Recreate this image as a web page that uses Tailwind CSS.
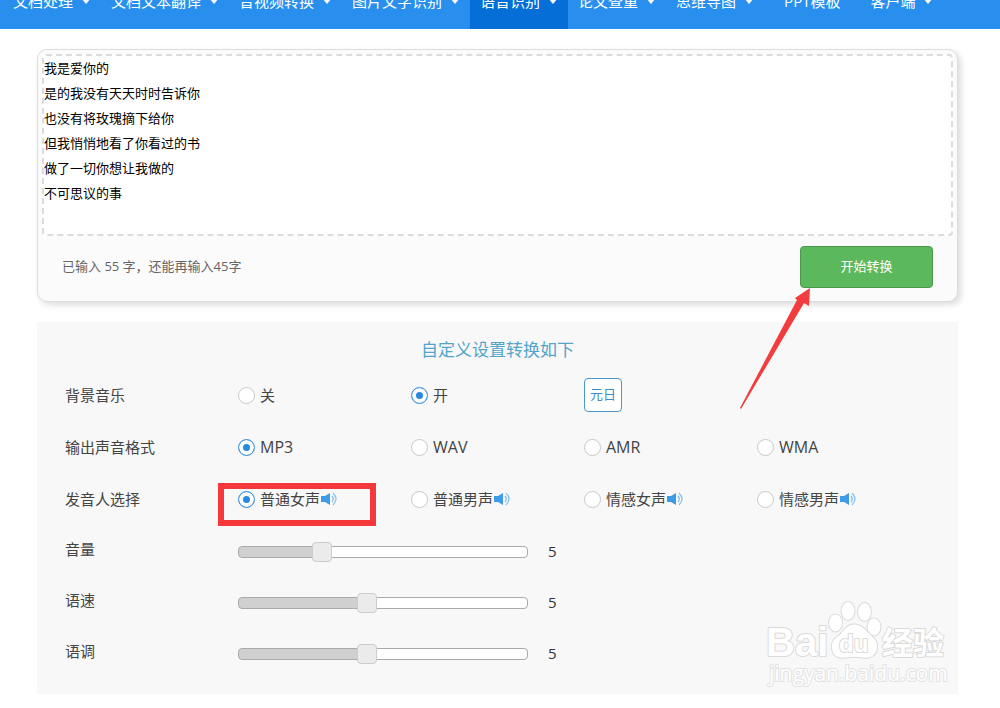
<!DOCTYPE html>
<html lang="zh-CN">
  <head>
    <meta charset="UTF-8" />
    <meta name="viewport" content="width=device-width, initial-scale=1.0" />
    <title>语音识别</title>
    <script src="https://cdn.jsdelivr.net/npm/@tailwindcss/browser@4"></script>
  </head>

  <body class="bg-white text-[#444] text-[15px] font-['Open_Sans','Noto_Sans_CJK_SC',sans-serif]">
    <svg class="hidden">
      <symbol id="caret" viewBox="0 0 10 6">
        <path d="M0 0h10L5 6z" fill="currentColor" />
      </symbol>
      <symbol id="speaker" viewBox="0 0 17 14">
        <path d="M0 4h4L9 1v12L4 10H0z" fill="#3f9be6" />
        <path d="M11 4q2.500 3 0 6" fill="none" stroke="#7dbdf0" stroke-width="1.300" />
        <path d="M12 1q6 6 0 12" fill="none" stroke="#8cc4f0" stroke-width="1.300" />
      </symbol>
    </svg>

    <header class="h-[29px] overflow-hidden bg-[#288fef]">
      <nav class="-mt-[27px] h-14 pl-[3px] flex text-white whitespace-nowrap">
        <a href="#" class="flex items-center gap-2 px-2.5">文档处理<svg class="w-2.5 h-1.5"><use href="#caret" /></svg></a>
        <a href="#" class="flex items-center gap-2 px-2.5">文档文本翻译<svg class="w-2.5 h-1.5"><use href="#caret" /></svg></a>
        <a href="#" class="flex items-center gap-2 px-2.5">音视频转换<svg class="w-2.5 h-1.5"><use href="#caret" /></svg></a>
        <a href="#" class="flex items-center gap-2 px-2.5">图片文字识别<svg class="w-2.5 h-1.5"><use href="#caret" /></svg></a>
        <a href="#" class="flex items-center gap-2 px-2.5 bg-[#056fd7]">语音识别<svg class="w-2.5 h-1.5"><use href="#caret" /></svg></a>
        <a href="#" class="flex items-center gap-2 px-2.5">论文查重<svg class="w-2.5 h-1.5"><use href="#caret" /></svg></a>
        <a href="#" class="flex items-center gap-2 px-2.5">思维导图<svg class="w-2.5 h-1.5"><use href="#caret" /></svg></a>
        <a href="#" class="flex items-center px-5">PPT模板</a>
        <a href="#" class="flex items-center gap-2 px-2.5">客户端<svg class="w-2.5 h-1.5"><use href="#caret" /></svg></a>
      </nav>
    </header>

    <main class="pt-5 pl-[37px] pr-[42px] pb-3">
      <!-- Texto de entrada -->
      <section class="p-1 border border-[#ddd] rounded-[10px] bg-[#fbfbfb] shadow-[3px_3px_6px_#ddd]">
        <textarea
          aria-label="输入文字"
          class="block w-full h-[182px] resize-none overflow-hidden border-2 border-dashed border-[#dcdcdc] rounded bg-white text-[13px] leading-[25px] text-black outline-none"
        >我是爱你的
是的我没有天天时时告诉你
也没有将玫瑰摘下给你
但我悄悄地看了你看过的书
做了一切你想让我做的
不可思议的事</textarea>
        <div class="flex items-center justify-between h-[61px] px-5">
          <p class="text-[13px] text-[#666]">已输入 55 字，还能再输入45字</p>
          <div class="relative">
            <button class="block w-[133px] h-[42px] rounded border border-[#4a9a4c] bg-[#5cb85c] text-[13px] text-white">开始转换</button>
            <svg class="absolute z-10 -left-[61px] top-[42px] w-[72px] h-[122px]" viewBox="0 0 72 122">
              <path d="M71 0L70 18L65 15L2 121L1 120L58 12L56 10z" fill="#f23c3d" />
            </svg>
          </div>
        </div>
      </section>

      <section class="relative mt-5 px-7 pb-[17px] bg-[#f8f8f8]">
        <h2 class="h-12 pt-2 flex items-center justify-center text-[17px] text-[#52a5c9]">自定义设置转换如下</h2>

        <div class="grid grid-cols-5 items-center h-[50px]">
          <span>背景音乐</span>
          <label class="flex items-center gap-[5px]">
            <input type="radio" name="music" class="appearance-none size-[17px] rounded-full border border-[#c8c8c8] bg-white checked:border-[#4a97dc] checked:bg-[#2889e2] checked:shadow-[inset_0_0_0_4px_white]" />关
          </label>
          <label class="flex items-center gap-[5px]">
            <input type="radio" name="music" checked class="appearance-none size-[17px] rounded-full border border-[#c8c8c8] bg-white checked:border-[#4a97dc] checked:bg-[#2889e2] checked:shadow-[inset_0_0_0_4px_white]" />开
          </label>
          <button class="w-[38px] h-[34px] rounded border border-[#4b97cb] bg-white text-[13px] text-[#3f8bc8]">元日</button>
        </div>

        <div class="grid grid-cols-5 items-center h-[54px]">
          <span>输出声音格式</span>
          <label class="flex items-center gap-[5px] text-base">
            <input type="radio" name="format" checked class="appearance-none size-[17px] rounded-full border border-[#c8c8c8] bg-white checked:border-[#4a97dc] checked:bg-[#2889e2] checked:shadow-[inset_0_0_0_4px_white]" />MP3
          </label>
          <label class="flex items-center gap-[5px] text-base">
            <input type="radio" name="format" class="appearance-none size-[17px] rounded-full border border-[#c8c8c8] bg-white checked:border-[#4a97dc] checked:bg-[#2889e2] checked:shadow-[inset_0_0_0_4px_white]" />WAV
          </label>
          <label class="flex items-center gap-[5px] text-base">
            <input type="radio" name="format" class="appearance-none size-[17px] rounded-full border border-[#c8c8c8] bg-white checked:border-[#4a97dc] checked:bg-[#2889e2] checked:shadow-[inset_0_0_0_4px_white]" />AMR
          </label>
          <label class="flex items-center gap-[5px] text-base">
            <input type="radio" name="format" class="appearance-none size-[17px] rounded-full border border-[#c8c8c8] bg-white checked:border-[#4a97dc] checked:bg-[#2889e2] checked:shadow-[inset_0_0_0_4px_white]" />WMA
          </label>
        </div>

        <div class="grid grid-cols-5 items-center h-[50px]">
          <span>发音人选择</span>
          <div class="relative">
            <label class="flex items-center gap-[5px]">
              <input type="radio" name="voice" checked class="appearance-none size-[17px] rounded-full border border-[#c8c8c8] bg-white checked:border-[#4a97dc] checked:bg-[#2889e2] checked:shadow-[inset_0_0_0_4px_white]" />
              <span class="flex items-center gap-px">普通女声<svg class="w-[17px] h-3.5"><use href="#speaker" /></svg></span>
            </label>
            <div class="absolute -left-5 -top-[5px] w-[158px] h-[43px] border-[6px] border-[#f5383a] pointer-events-none"></div>
          </div>
          <label class="flex items-center gap-[5px]">
            <input type="radio" name="voice" class="appearance-none size-[17px] rounded-full border border-[#c8c8c8] bg-white checked:border-[#4a97dc] checked:bg-[#2889e2] checked:shadow-[inset_0_0_0_4px_white]" />
            <span class="flex items-center gap-px">普通男声<svg class="w-[17px] h-3.5"><use href="#speaker" /></svg></span>
          </label>
          <label class="flex items-center gap-[5px]">
            <input type="radio" name="voice" class="appearance-none size-[17px] rounded-full border border-[#c8c8c8] bg-white checked:border-[#4a97dc] checked:bg-[#2889e2] checked:shadow-[inset_0_0_0_4px_white]" />
            <span class="flex items-center gap-px">情感女声<svg class="w-[17px] h-3.5"><use href="#speaker" /></svg></span>
          </label>
          <label class="flex items-center gap-[5px]">
            <input type="radio" name="voice" class="appearance-none size-[17px] rounded-full border border-[#c8c8c8] bg-white checked:border-[#4a97dc] checked:bg-[#2889e2] checked:shadow-[inset_0_0_0_4px_white]" />
            <span class="flex items-center gap-px">情感男声<svg class="w-[17px] h-3.5"><use href="#speaker" /></svg></span>
          </label>
        </div>

        <!-- Controles deslizantes -->
        <div class="grid grid-cols-5 items-center h-[51px]">
          <label for="volume">音量</label>
          <div class="col-span-4 flex items-center gap-5 pt-1">
            <input id="volume" type="range" min="0" max="1000" value="274" style="--fill: 29%"
              class="appearance-none w-[290px] h-5 bg-transparent [&::-webkit-slider-runnable-track]:h-3 [&::-webkit-slider-runnable-track]:rounded [&::-webkit-slider-runnable-track]:border [&::-webkit-slider-runnable-track]:border-[#aaa] [&::-webkit-slider-runnable-track]:bg-[linear-gradient(to_right,#d0d0d0_var(--fill),#fff_var(--fill))] [&::-webkit-slider-thumb]:appearance-none [&::-webkit-slider-thumb]:size-5 [&::-webkit-slider-thumb]:-mt-[5px] [&::-webkit-slider-thumb]:rounded [&::-webkit-slider-thumb]:border [&::-webkit-slider-thumb]:border-[#ccc] [&::-webkit-slider-thumb]:bg-[#ebebeb]" />
            <output for="volume" class="text-[#333]">5</output>
          </div>
        </div>
        <div class="grid grid-cols-5 items-center h-[51px]">
          <label for="speed">语速</label>
          <div class="col-span-4 flex items-center gap-5 pt-1">
            <input id="speed" type="range" min="0" max="1000" value="441" style="--fill: 45%"
              class="appearance-none w-[290px] h-5 bg-transparent [&::-webkit-slider-runnable-track]:h-3 [&::-webkit-slider-runnable-track]:rounded [&::-webkit-slider-runnable-track]:border [&::-webkit-slider-runnable-track]:border-[#aaa] [&::-webkit-slider-runnable-track]:bg-[linear-gradient(to_right,#d0d0d0_var(--fill),#fff_var(--fill))] [&::-webkit-slider-thumb]:appearance-none [&::-webkit-slider-thumb]:size-5 [&::-webkit-slider-thumb]:-mt-[5px] [&::-webkit-slider-thumb]:rounded [&::-webkit-slider-thumb]:border [&::-webkit-slider-thumb]:border-[#ccc] [&::-webkit-slider-thumb]:bg-[#ebebeb]" />
            <output for="speed" class="text-[#333]">5</output>
          </div>
        </div>
        <div class="grid grid-cols-5 items-center h-[51px]">
          <label for="pitch">语调</label>
          <div class="col-span-4 flex items-center gap-5 pt-1">
            <input id="pitch" type="range" min="0" max="1000" value="441" style="--fill: 45%"
              class="appearance-none w-[290px] h-5 bg-transparent [&::-webkit-slider-runnable-track]:h-3 [&::-webkit-slider-runnable-track]:rounded [&::-webkit-slider-runnable-track]:border [&::-webkit-slider-runnable-track]:border-[#aaa] [&::-webkit-slider-runnable-track]:bg-[linear-gradient(to_right,#d0d0d0_var(--fill),#fff_var(--fill))] [&::-webkit-slider-thumb]:appearance-none [&::-webkit-slider-thumb]:size-5 [&::-webkit-slider-thumb]:-mt-[5px] [&::-webkit-slider-thumb]:rounded [&::-webkit-slider-thumb]:border [&::-webkit-slider-thumb]:border-[#ccc] [&::-webkit-slider-thumb]:bg-[#ebebeb]" />
            <output for="pitch" class="text-[#333]">5</output>
          </div>
        </div>

        <!-- Marca de agua -->
        <svg class="absolute right-2 bottom-1 w-[186px] h-[92px] pointer-events-none" viewBox="764 598 186 92">
          <g fill="#fff" stroke="#dadada" stroke-width="2" paint-order="stroke" stroke-linejoin="round">
            <text x="766" y="656" font-family="Liberation Sans" font-weight="700" font-size="40">Bai</text>
            <ellipse cx="848" cy="611" rx="6.500" ry="9" />
            <ellipse cx="864.500" cy="612" rx="6.500" ry="9" />
            <ellipse cx="835.500" cy="623" rx="6.500" ry="8.500" />
            <ellipse cx="874" cy="627" rx="6.500" ry="8.500" />
            <path d="M854 624.500c-8 0-10 7-15 11c-6 4-8 8-7 13c1 8 7 10 13 9c6-1 12-1 18 0c7 1 13-2 14-9c1-6-2-9-6-13c-6-5-8-11-17-11z" />
            <text x="839" y="652" font-family="Liberation Sans" font-weight="700" font-size="24">du</text>
            <text x="882" y="654" font-family="Noto Sans CJK SC" font-weight="700" font-size="31">经验</text>
            <text x="769" y="681" font-family="Open Sans" font-size="21" stroke="#e2e2e2">jingyan.baidu.com</text>
          </g>
        </svg>
      </section>
    </main>
  </body>
</html>
